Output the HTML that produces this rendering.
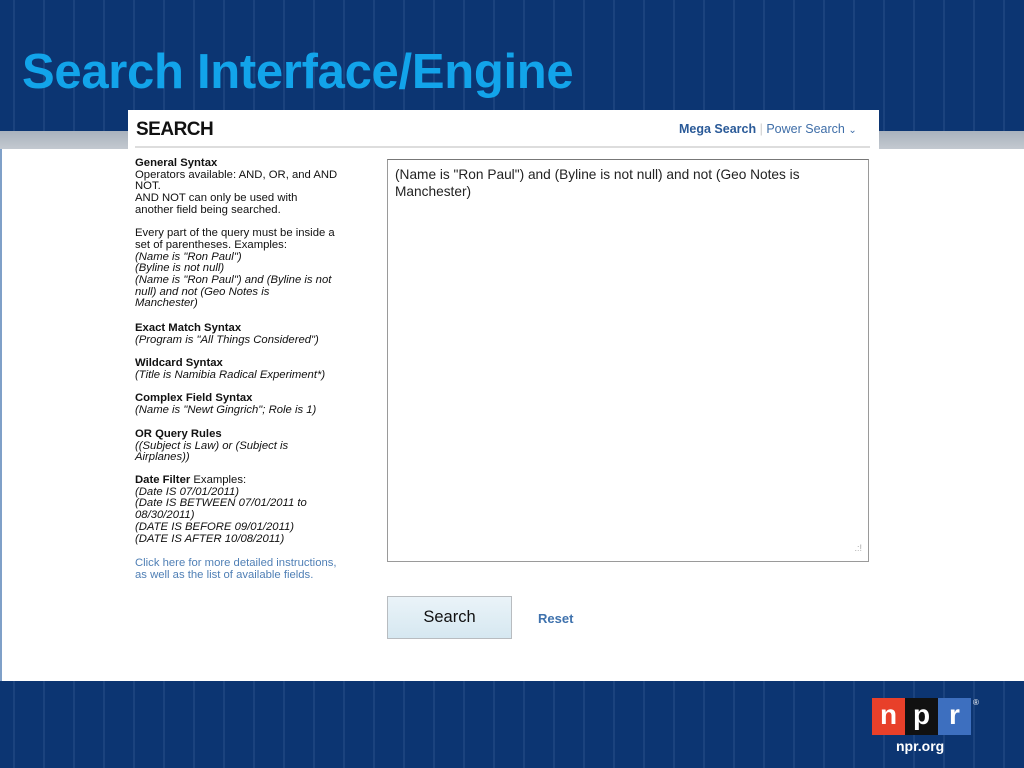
<!DOCTYPE html>
<html><head><meta charset="utf-8"><style>
body{margin:0;width:1024px;height:768px;position:relative;overflow:hidden;background:#fff;font-family:"Liberation Sans",sans-serif}
.hdr{position:absolute;left:0;top:0;width:1024px;height:131px;background:#0c3572;background-image:repeating-linear-gradient(90deg,rgba(255,255,255,0) 0 13px,rgba(120,150,200,.14) 13px 15px,rgba(255,255,255,0) 15px 30px)}
.band{position:absolute;left:0;top:131px;width:1024px;height:18px;background:linear-gradient(#a9b2bd,#c3c9d0)}
.ftr{position:absolute;left:0;top:681px;width:1024px;height:87px;background:#0c3572;background-image:repeating-linear-gradient(90deg,rgba(255,255,255,0) 0 13px,rgba(120,150,200,.14) 13px 15px,rgba(255,255,255,0) 15px 30px)}
.lline{position:absolute;left:0;top:149px;width:2px;height:532px;background:#7fa0c8}
h1{position:absolute;left:22px;top:44px;margin:0;font-size:49px;color:#12a4ea;font-weight:bold;letter-spacing:-0.3px}
.card{position:absolute;left:128px;top:110px;width:751px;height:40px;background:#fff}
.sep{position:absolute;left:135px;top:146px;width:735px;height:2px;background:#ddd}
.stitle{position:absolute;left:136px;top:119px;font-size:19px;font-weight:bold;color:#111;letter-spacing:-0.5px}
.nav{position:absolute;left:679px;top:122px;font-size:12.5px;color:#3f6ea8}
.nav b{color:#2a5a98}
.col{position:absolute;left:135px;font-size:11.3px;line-height:11.7px;color:#111;white-space:nowrap}
.col i{font-style:italic}
.ta{position:absolute;left:387px;top:159px;width:480px;height:401px;border:1px solid #9a9a9a;border-top-color:#777;font-size:13.7px;line-height:17px;color:#222}
.ta div{padding:6px 7px}
.btn{position:absolute;left:387px;top:596px;width:123px;height:41px;border:1px solid #b8bcc0;background:linear-gradient(#eaf3f8,#d6e8f1);font-size:16.5px;color:#111;text-align:center;line-height:41px}
.reset{position:absolute;left:538px;top:611px;font-size:13px;color:#3f72ad;font-weight:bold}
.logo{position:absolute;left:872px;top:698px}
.logo span{display:inline-block;width:33px;height:37px;color:#fff;font-weight:bold;font-size:28px;text-align:center;line-height:34px;vertical-align:top}
</style></head><body>
<div class="hdr"></div><div class="band"></div><div class="ftr"></div><div class="lline"></div>
<h1>Search Interface/Engine</h1>
<div class="card"></div><div class="sep"></div>
<div class="stitle">SEARCH</div>
<div class="nav"><b>Mega Search</b> <span style="color:#ccc">|</span> Power Search <span style="font-size:10px">&#8964;</span></div>
<div class="col" style="top:158px"><b>General Syntax</b><br>Operators available: AND, OR, and AND<br>NOT.<br>AND NOT can only be used with<br>another field being searched.<br><br>Every part of the query must be inside a<br>set of parentheses. Examples:<br><i>(Name is "Ron Paul")<br>(Byline is not null)<br>(Name is "Ron Paul") and (Byline is not<br>null) and not (Geo Notes is<br>Manchester)</i></div>
<div class="col" style="top:323px"><b>Exact Match Syntax</b><br><i>(Program is "All Things Considered")</i></div>
<div class="col" style="top:358px"><b>Wildcard Syntax</b><br><i>(Title is Namibia Radical Experiment*)</i></div>
<div class="col" style="top:393px"><b>Complex Field Syntax</b><br><i>(Name is "Newt Gingrich"; Role is 1)</i></div>
<div class="col" style="top:429px"><b>OR Query Rules</b><br><i>((Subject is Law) or (Subject is<br>Airplanes))</i></div>
<div class="col" style="top:475px"><b>Date Filter</b> Examples:<br><i>(Date IS 07/01/2011)<br>(Date IS BETWEEN 07/01/2011 to<br>08/30/2011)<br>(DATE IS BEFORE 09/01/2011)<br>(DATE IS AFTER 10/08/2011)</i></div>
<div class="col" style="top:558px;color:#4f7fb5">Click here for more detailed instructions,<br>as well as the list of available fields.</div>
<div class="ta"><div>(Name is "Ron Paul") and (Byline is not null) and not (Geo Notes is<br>Manchester)</div><span style="position:absolute;right:6px;bottom:4px;font-size:9px;color:#aaa">.:!</span></div>
<div class="btn">Search</div>
<div class="reset">Reset</div>
<div class="logo"><span style="background:#e8402a">n</span><span style="background:#111">p</span><span style="background:#3d6fbf">r</span><sup style="color:#fff;font-size:8px;vertical-align:top;margin-left:2px">®</sup>
<div style="color:#fff;font-weight:bold;font-size:14px;margin:3px 0 0 24px">npr.org</div></div>
</body></html>
